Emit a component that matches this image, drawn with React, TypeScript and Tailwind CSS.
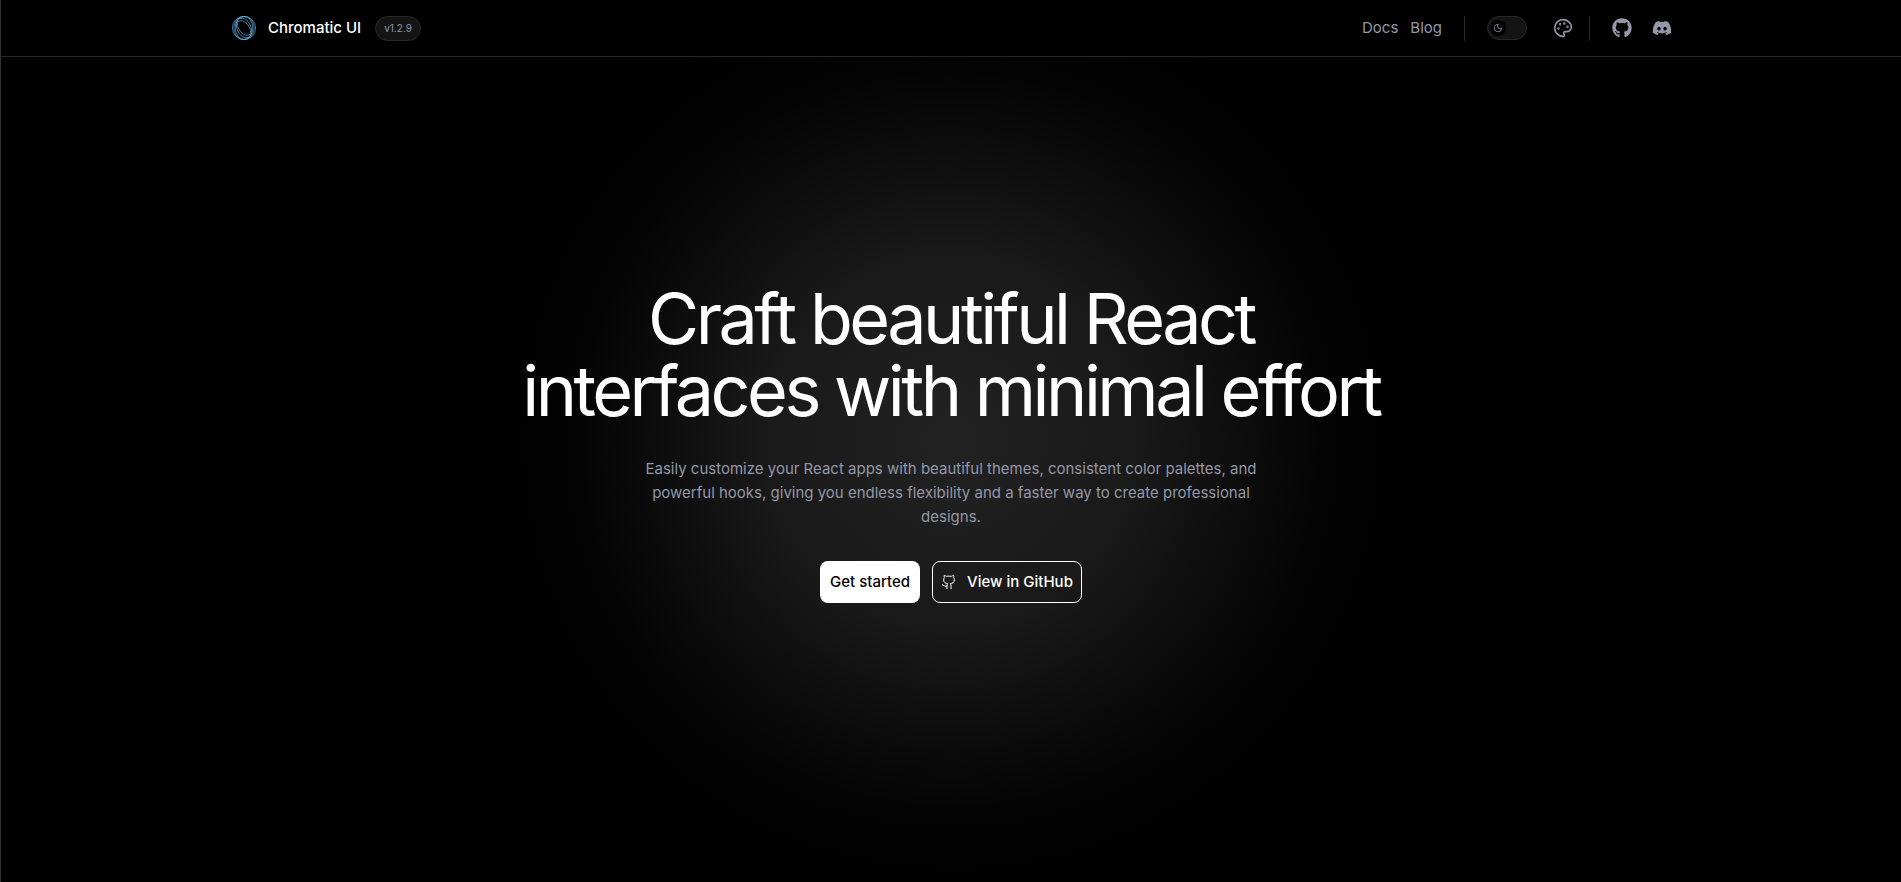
import { FaDiscord, FaGithub } from 'react-icons/fa';
import { LuGithub, LuMoon, LuPalette } from 'react-icons/lu';

function Logo() {
  return (
    <svg className="size-6" viewBox="0 0 24 24" fill="none" stroke="#6cc0f5" strokeWidth="0.6" aria-hidden="true">
      <circle cx="12" cy="12" r="11.6" />
      <ellipse cx="12" cy="12" rx="10.2" ry="11.7" />
      <ellipse cx="12" cy="12" rx="8.8" ry="11.5" />
      <ellipse cx="12" cy="12" rx="7" ry="10.4" transform="rotate(-25 12 12)" />
      <ellipse cx="12" cy="12" rx="5" ry="8.6" transform="rotate(-40 12 12)" />
    </svg>
  );
}

function Header() {
  return (
    <header className="border-b border-[#27272a] bg-black pl-0.5">
      <div className="mx-auto flex h-14 max-w-[1440px] items-center justify-between">
        <div className="flex items-center gap-3.5">
          <a href="#home" className="flex items-center gap-3 font-medium text-white">
            <Logo />
            Chromatic UI
          </a>
          <span className="flex h-[25px] items-center rounded-full border border-[#27272a] bg-[#141414] px-2 text-[10px] text-[#9397a8]">
            v1.2.9
          </span>
        </div>
        <nav className="flex items-center text-[#9397a8]">
          <a href="#docs">Docs</a>
          <a href="#blog" className="ml-3">Blog</a>
          <span className="ml-[22px] h-[25px] w-px bg-[#27272a]" />
          <button
            type="button"
            role="switch"
            aria-checked="true"
            aria-label="Dark mode"
            className="ml-[22px] flex h-6 w-10 items-center rounded-full border border-[#27272a] bg-[#141414] px-0.5"
          >
            <span className="flex size-4 items-center justify-center rounded-full bg-black">
              <LuMoon className="size-2.5" />
            </span>
          </button>
          <button type="button" aria-label="Theme colors" className="ml-[26px]">
            <LuPalette className="size-5" />
          </button>
          <span className="ml-4 h-[25px] w-px bg-[#27272a]" />
          <a href="#github" aria-label="GitHub" className="ml-[22px]">
            <FaGithub className="size-5" />
          </a>
          <a href="#discord" aria-label="Discord" className="ml-5">
            <FaDiscord className="size-5" />
          </a>
        </nav>
      </div>
    </header>
  );
}

export default function App() {
  return (
    <div className="flex min-h-screen flex-col border-l border-[#333336] bg-black bg-[radial-gradient(circle_at_center,#222222_0px,#191919_190px,#0d0d0d_290px,#040404_370px,#000000_460px)] font-[Inter,sans-serif] text-[15px] leading-6">
      <Header />
      <main className="flex flex-1 flex-col items-center px-4 pt-[226px] text-center">
        <h1 className="max-w-[900px] text-[70px] leading-[72px] tracking-tighter text-white">
          Craft beautiful React interfaces with minimal effort
        </h1>
        <p className="mt-[30px] max-w-[640px] text-[#9397a8]">
          Easily customize your React apps with beautiful themes, consistent color palettes, and powerful hooks, giving
          you endless flexibility and a faster way to create professional designs.
        </p>
        <div className="mt-8 flex gap-3 font-medium">
          <a href="#docs" className="flex h-[42px] items-center rounded-lg bg-white px-2.5 text-black">
            Get started
          </a>
          <a href="#github" className="flex h-[42px] items-center gap-2.5 rounded-lg border border-white px-2 text-white">
            <LuGithub className="size-4" strokeWidth={1.5} />
            View in GitHub
          </a>
        </div>
      </main>
    </div>
  );
}
